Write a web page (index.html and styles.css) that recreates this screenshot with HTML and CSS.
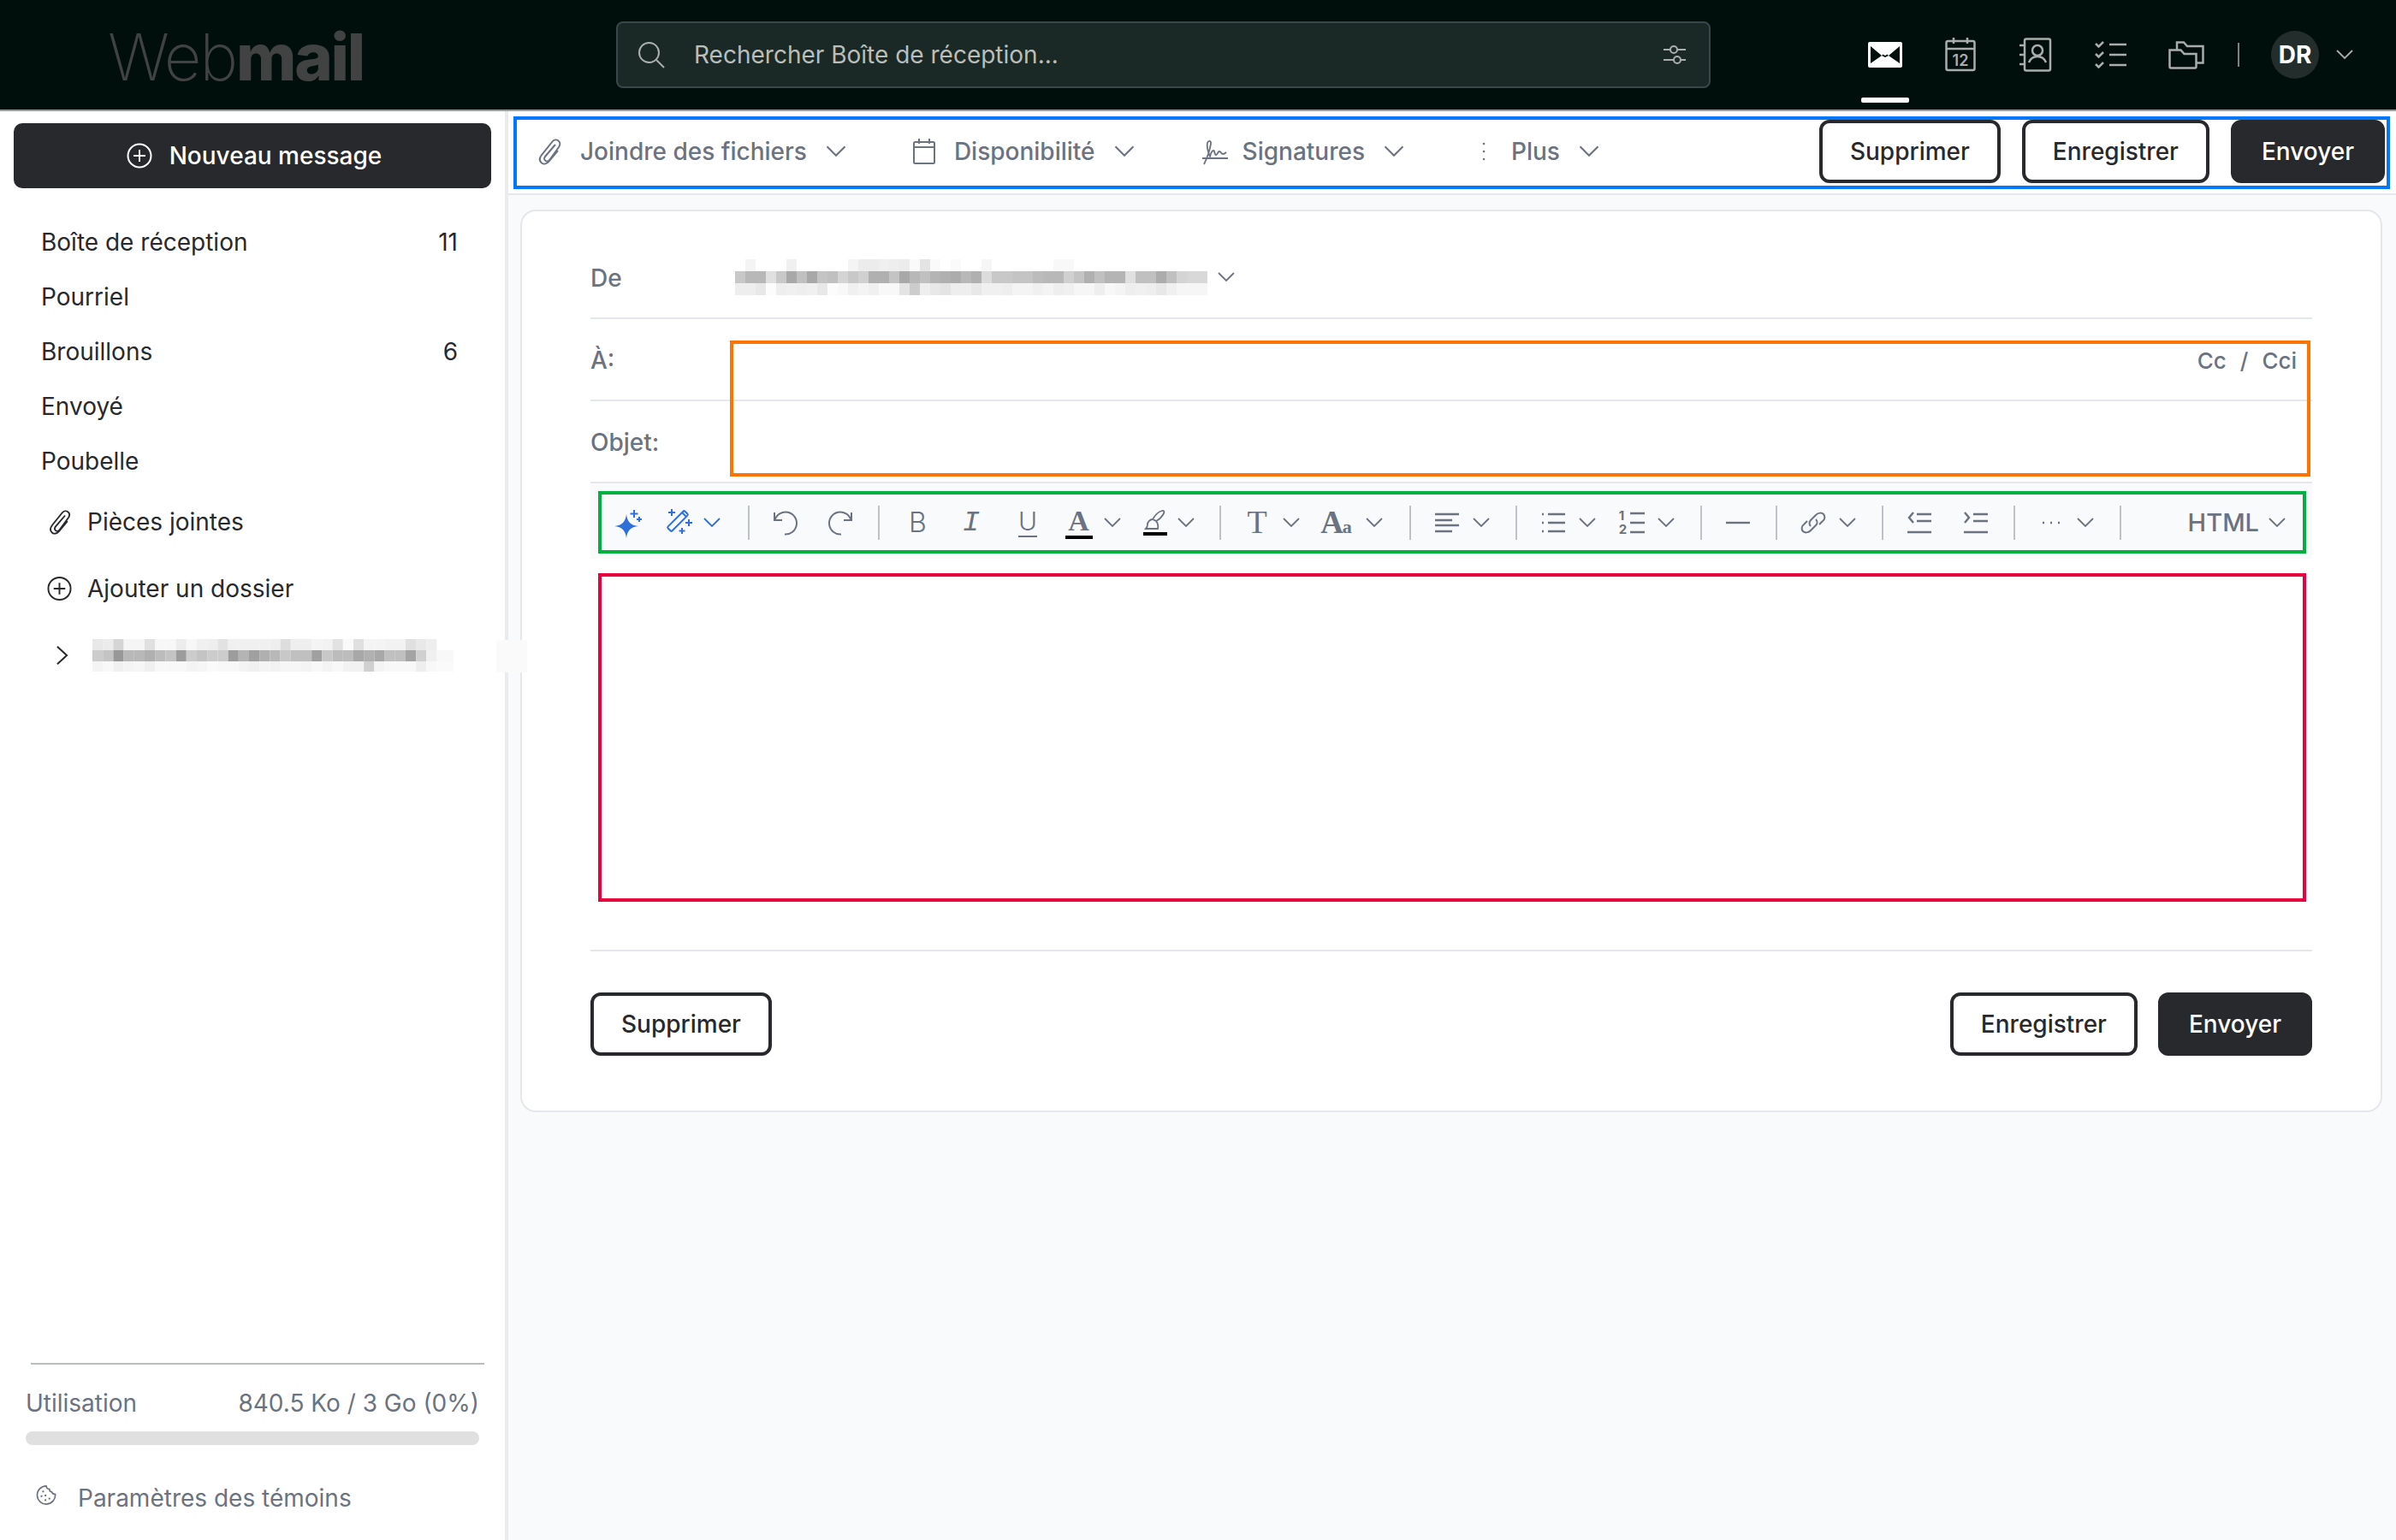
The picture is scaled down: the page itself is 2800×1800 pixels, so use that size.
FILE: index.html
```html
<!DOCTYPE html>
<html lang="fr">
<head>
  <meta charset="UTF-8">
  <title>Webmail</title>
  <link rel="stylesheet" href="styles.css">
</head>
<body>
  <svg class="defs" aria-hidden="true">
    <symbol id="chev" viewBox="0 0 20 12"><path d="M1 1l9 9 9-9" fill="none" stroke="currentColor" stroke-width="1.8"/></symbol>
    <symbol id="clip" viewBox="0 0 28 32"><path d="M21 8L9 22c-1.500 2-1 4 .5 5s3.500.5 5-1.500L25 11c2-3 1.500-6-.5-7.500S19.500 2 17.500 4.500L5 20c-3 4-2.500 7.500 0 9.500s6 1 8.500-2L24 15" fill="none" stroke="currentColor" stroke-width="2"/></symbol>
    <symbol id="plus-circle" viewBox="0 0 30 30"><circle cx="15" cy="15" r="13.500" fill="none" stroke="currentColor" stroke-width="2"/><path d="M15 8v14M8 15h14" stroke="currentColor" stroke-width="2"/></symbol>
  </svg>

  <header class="topbar">
    <div class="logo"><span class="logo-thin">Web</span><span class="logo-bold">mail</span></div>
    <div class="search">
      <svg class="search-icon" viewBox="0 0 32 32"><circle cx="13.500" cy="13.500" r="11.500" fill="none" stroke="currentColor" stroke-width="2"/><path d="M22 22l9 9" stroke="currentColor" stroke-width="2"/></svg>
      <span class="search-text">Rechercher Boîte de réception...</span>
      <svg class="filter-icon" viewBox="0 0 28 24"><path d="M1 6h8M17 6h10M1 18h12M21 18h6" stroke="currentColor" stroke-width="2"/><circle cx="13" cy="6" r="4" fill="none" stroke="currentColor" stroke-width="2"/><circle cx="17" cy="18" r="4" fill="none" stroke="currentColor" stroke-width="2"/></svg>
    </div>
    <nav class="apps">
      <a class="app app-active">
        <svg class="app-icon" width="40" height="30" viewBox="0 0 40 30"><rect width="40" height="30" rx="2" fill="#fff"/><path d="M3 5l13 11-13 9zM37 5L24 16l13 9z" fill="#010f0c"/><path d="M16 16l4 2 4-2-1.500-1.500-2.500 1.500-2.500-1.500z" fill="#010f0c"/></svg>
      </a>
      <a class="app">
        <svg class="app-icon" width="36" height="40" viewBox="0 0 36 40"><rect x="1.500" y="4" width="33" height="34" rx="2" fill="none" stroke="currentColor" stroke-width="2.500"/><path d="M2 13h32M10 0v7M26 0v7" stroke="currentColor" stroke-width="2.500"/><text x="18" y="33" class="cal-num">12</text></svg>
      </a>
      <a class="app">
        <svg class="app-icon" width="38" height="40" viewBox="0 0 38 40"><rect x="6" y="1.500" width="30" height="37" rx="2" fill="none" stroke="currentColor" stroke-width="2.500"/><path d="M0 9h5M0 20h5M0 31h5" stroke="currentColor" stroke-width="2.500"/><circle cx="21" cy="15" r="6" fill="none" stroke="currentColor" stroke-width="2.500"/><path d="M11 29c2-5 6-7 10-7s8 2 10 7" fill="none" stroke="currentColor" stroke-width="2.500"/></svg>
      </a>
      <a class="app">
        <svg class="app-icon" width="38" height="34" viewBox="0 0 38 34"><path d="M1 4l3.500 3.500L10 2M1 16l3.500 3.500L10 14M1 28l3.500 3.500L10 26M17 5h20M17 17h20M17 29h20" fill="none" stroke="currentColor" stroke-width="2.500"/></svg>
      </a>
      <a class="app">
        <svg class="app-icon" width="42" height="34" viewBox="0 0 42 34"><path d="M1.500 11.500h13l4 4.500h14v15a1.500 1.500 0 0 1-1.500 1.500H3a1.500 1.500 0 0 1-1.500-1.500zM10 11V2.500h8l4 4.500h18.500v19.500H33" fill="none" stroke="currentColor" stroke-width="2.500"/></svg>
      </a>
    </nav>
    <span class="app-sep"></span>
    <span class="avatar">DR</span>
    <svg class="avatar-chev"><use href="#chev"/></svg>
  </header>

  <div class="layout">
    <aside class="sidebar">
      <button class="new-msg"><svg class="new-icon"><use href="#plus-circle"/></svg>Nouveau message</button>
      <ul class="folders">
        <li class="folder">Boîte de réception<span class="count">11</span></li>
        <li class="folder">Pourriel</li>
        <li class="folder">Brouillons<span class="count">6</span></li>
        <li class="folder">Envoyé</li>
        <li class="folder">Poubelle</li>
      </ul>
      <div class="side-link"><svg class="side-icon"><use href="#clip"/></svg>Pièces jointes</div>
      <div class="side-link"><svg class="side-icon"><use href="#plus-circle"/></svg>Ajouter un dossier</div>
      <div class="side-link account">
        <svg class="acc-chev" viewBox="0 0 16 26"><path d="M2 2l12 11L2 24" fill="none" stroke="currentColor" stroke-width="2.200"/></svg>
        <canvas class="mosaic" id="mosaic-account" width="422" height="38"></canvas>
      </div>
      <span class="resize-ghost"></span>
      <div class="side-foot">
        <div class="side-rule"></div>
        <div class="usage-row"><span>Utilisation</span><span>840.5 Ko / 3 Go (0%)</span></div>
        <div class="usage-bar"></div>
        <div class="cookies">
          <svg class="cookie-icon" viewBox="0 0 26 26"><path d="M13 2c.5 3 2 4 4 4 0 2 1 3.500 3 3.500 .5 2 2 3 4.500 3A11.500 11.500 0 1 1 13 2z" fill="none" stroke="currentColor" stroke-width="1.800"/><path d="M9 9h.1M7 15h.1M12 14h.1M12 20h.1M17 18h.1" stroke="currentColor" stroke-width="2.500" stroke-linecap="round"/></svg>
          Paramètres des témoins
        </div>
      </div>
    </aside>

    <main class="main">
      <div class="compose-bar">
        <div class="bar-box">
          <div class="bar-item"><svg class="bar-clip"><use href="#clip"/></svg>Joindre des fichiers<svg class="bar-chev"><use href="#chev"/></svg></div>
          <div class="bar-item"><svg class="bar-cal" viewBox="0 0 26 30"><rect x="1" y="4" width="24" height="25" rx="1.500" fill="none" stroke="currentColor" stroke-width="2"/><path d="M1 10h24M7 0v6M19 0v6" stroke="currentColor" stroke-width="2"/></svg>Disponibilité<svg class="bar-chev"><use href="#chev"/></svg></div>
          <div class="bar-item"><svg class="bar-sign" viewBox="0 0 32 32"><path d="M1 24h30M3 31C7 23 10 13 11 7c.5-4-3-4-4-1-1 4 .5 10 3 16 1-4 2-7 4-7s1 5 3 5 2-4 4-4 2 3 4 3 3-1 4-2" fill="none" stroke="currentColor" stroke-width="1.800"/></svg>Signatures<svg class="bar-chev"><use href="#chev"/></svg></div>
          <div class="bar-item bar-plus"><svg class="bar-dots" viewBox="0 0 4 24"><path d="M2 3h.1M2 12h.1M2 21h.1" stroke="currentColor" stroke-width="2.500" stroke-linecap="round"/></svg>Plus<svg class="bar-chev"><use href="#chev"/></svg></div>
          <div class="bar-actions">
            <button class="btn btn-del">Supprimer</button>
            <button class="btn btn-save">Enregistrer</button>
            <button class="btn btn-send">Envoyer</button>
          </div>
        </div>
      </div>

      <section class="card">
        <div class="field">
          <label class="field-label">De</label>
          <canvas class="mosaic from-mosaic" id="mosaic-from" width="552" height="42"></canvas>
          <svg class="from-chev"><use href="#chev"/></svg>
        </div>
        <div class="recipients">
          <div class="field">
            <label class="field-label">À:</label>
            <span class="cc"><span>Cc</span><span>/</span><span>Cci</span></span>
          </div>
          <div class="field">
            <label class="field-label">Objet:</label>
          </div>
          <div class="outline-to"></div>
        </div>

        <div class="editor-tools">
          <div class="tools-box">
            <div class="tool-group tool-group-first">
              <span class="tool tool-ai tool-spark">
                <svg width="34" height="36" viewBox="0 0 34 36"><path d="M15 8c1 9 5 13 14 14-9 1-13 5-14 14-1-9-5-13-14-14 9-1 13-5 14-14z" fill="#2f6fd8"/><path d="M24 3v9M19.500 7.500h9M30 11v6M27 14h6" stroke="#2f6fd8" stroke-width="2"/></svg>
              </span>
              <span class="drop drop-ai">
                <span class="tool tool-ai">
                  <svg width="34" height="34" viewBox="0 0 34 34"><rect x="-14" y="-3.500" width="28" height="7" rx="1.500" transform="translate(15 15) rotate(-45)" fill="none" stroke="#2f6fd8" stroke-width="2"/><path d="M20 5l5 5" stroke="#2f6fd8" stroke-width="2"/><path d="M8 1v8M4 5h8M28 13v8M24 17h8M20 23v7M16.500 26.500h7" stroke="#2f6fd8" stroke-width="2"/></svg>
                </span>
                <svg class="tool-chev tool-ai"><use href="#chev"/></svg>
              </span>
            </div>
            <div class="tool-group">
              <span class="tool"><svg width="32" height="32" viewBox="0 0 32 32"><path d="M3 4v9h9" fill="none" stroke="currentColor" stroke-width="2"/><path d="M3.500 13A13 13 0 1 1 15 29.500" fill="none" stroke="currentColor" stroke-width="2"/></svg></span>
              <span class="tool"><svg width="32" height="32" viewBox="0 0 32 32"><path d="M29 4v9h-9" fill="none" stroke="currentColor" stroke-width="2"/><path d="M28.500 13A13 13 0 1 0 17 29.500" fill="none" stroke="currentColor" stroke-width="2"/></svg></span>
            </div>
            <div class="tool-group">
              <span class="tool"><span class="glyph glyph-b">B</span></span>
              <span class="tool"><span class="glyph glyph-i">I</span></span>
              <span class="tool"><span class="glyph glyph-u">U</span></span>
              <span class="drop drop-a"><span class="tool"><span class="glyph glyph-a">A</span></span><svg class="tool-chev"><use href="#chev"/></svg></span>
              <span class="drop drop-brush"><span class="tool"><span class="brush-wrap"><svg width="28" height="24" viewBox="0 0 28 24"><path d="M3 22h14c1-5 0-7-2-9l-4-2c-3 0-6 3-6 6 0 2-1 4-2 5zM11 11c3-5 7-9 11-10 2-.5 3 1 2 3-2 4-5 7-9 9" fill="none" stroke="currentColor" stroke-width="1.800"/></svg></span></span><svg class="tool-chev"><use href="#chev"/></svg></span>
            </div>
            <div class="tool-group">
              <span class="drop"><span class="tool"><span class="glyph glyph-t">T</span></span><svg class="tool-chev"><use href="#chev"/></svg></span>
              <span class="drop drop-aa"><span class="tool"><span class="glyph glyph-aa">A<small>a</small></span></span><svg class="tool-chev"><use href="#chev"/></svg></span>
            </div>
            <div class="tool-group">
              <span class="drop"><span class="tool"><svg width="28" height="24" viewBox="0 0 28 24"><path d="M0 2h28M0 9h20M0 15h28M0 22h20" stroke="currentColor" stroke-width="2.400"/></svg></span><svg class="tool-chev"><use href="#chev"/></svg></span>
            </div>
            <div class="tool-group">
              <span class="drop"><span class="tool"><svg width="28" height="26" viewBox="0 0 28 26"><path d="M1 3h2M1 13h2M1 23h2M8 3h20M8 13h20M8 23h20" stroke="currentColor" stroke-width="2.400"/></svg></span><svg class="tool-chev"><use href="#chev"/></svg></span>
              <span class="drop"><span class="tool"><span class="ol-wrap"><span class="ol-nums"><span>1</span><span>2</span></span><svg width="18" height="28" viewBox="0 0 18 28"><path d="M1 3h17M1 14h17M1 25h17" stroke="currentColor" stroke-width="2.400"/></svg></span></span><svg class="tool-chev"><use href="#chev"/></svg></span>
            </div>
            <div class="tool-group">
              <span class="tool"><svg width="28" height="4" viewBox="0 0 28 4"><path d="M0 2h28" stroke="currentColor" stroke-width="2.400"/></svg></span>
            </div>
            <div class="tool-group">
              <span class="drop"><span class="tool"><svg width="32" height="30" viewBox="0 0 32 30"><path d="M13 19c-2-2-2-5 0-7l6-6c3-3 7-3 9-1s2 6-1 8l-4 4M19 11c2 2 2 5 0 7l-6 6c-3 3-7 3-9 1s-2-6 1-8l4-4" fill="none" stroke="currentColor" stroke-width="2"/></svg></span><svg class="tool-chev"><use href="#chev"/></svg></span>
            </div>
            <div class="tool-group">
              <span class="tool"><svg width="28" height="26" viewBox="0 0 28 26"><path d="M7 1L2 7l5 6M11 3h17M11 11h17M0 24h28" fill="none" stroke="currentColor" stroke-width="2.400"/></svg></span>
              <span class="tool tool-indent"><svg width="28" height="26" viewBox="0 0 28 26"><path d="M1 1l5 6-5 6M11 3h17M11 11h17M0 24h28" fill="none" stroke="currentColor" stroke-width="2.400"/></svg></span>
            </div>
            <div class="tool-group">
              <span class="drop"><span class="tool"><svg width="22" height="4" viewBox="0 0 22 4"><path d="M1 2h2M10 2h2M19 2h2" stroke="currentColor" stroke-width="2.400"/></svg></span><svg class="tool-chev"><use href="#chev"/></svg></span>
            </div>
            <div class="tool-group tool-group-html">
              <span class="html-label">HTML</span><svg class="tool-chev"><use href="#chev"/></svg>
            </div>
          </div>
        </div>

        <div class="editor-body"></div>

        <div class="card-actions">
          <button class="btn btn-del">Supprimer</button>
          <button class="btn btn-save card-save">Enregistrer</button>
          <button class="btn btn-send">Envoyer</button>
        </div>
      </section>
    </main>
  </div>

  <script src="script.js"></script>
</body>
</html>
```
FILE: styles.css
```css
* {
  box-sizing: border-box;
}

html, body {
  margin: 0;
  height: 100%;
}

body {
  font-family: Inter, "Liberation Sans", sans-serif;
  font-size: 28px;
  color: #28292c;
  background: #fff;
  overflow: hidden;
}

button {
  font: inherit;
  font-weight: 500;
  cursor: pointer;
}

.defs {
  display: none;
}

/* top bar */
.topbar {
  display: flex;
  align-items: center;
  height: 130px;
  background: #010f0c;
  border-bottom: 2px solid #9a9f9d;
}

.logo {
  width: 720px;
  padding: 3px 0 0 126px;
  color: #414343;
  font-size: 76px;
  line-height: 1;
  letter-spacing: -2.3px;
}

.logo-thin {
  font-weight: 200;
}

.logo-bold {
  font-weight: 800;
}

.search {
  display: flex;
  align-items: center;
  width: 1279px;
  height: 78px;
  padding: 0 26px 0 23px;
  background: #1b2926;
  border: 2px solid #39474a;
  border-radius: 8px;
  color: #a9b0ae;
}

.search-icon {
  width: 32px;
  height: 32px;
}

.search-text {
  margin-left: 34px;
  color: #b9bebc;
}

.filter-icon {
  width: 28px;
  height: 24px;
  margin-left: auto;
}

.cal-num {
  font-family: Inter, sans-serif;
  font-size: 18px;
  font-weight: 600;
  text-anchor: middle;
  fill: currentColor;
}

.apps {
  display: flex;
  gap: 32px;
  margin-left: 176px;
  height: 128px;
}

.app {
  position: relative;
  display: flex;
  align-items: center;
  justify-content: center;
  width: 56px;
  color: #a9adab;
}

.app-active::after {
  content: "";
  position: absolute;
  left: 0;
  right: 0;
  bottom: 8px;
  height: 6px;
  border-radius: 2px;
  background: #fff;
}

.app-sep {
  width: 2px;
  height: 28px;
  margin-left: 32px;
  background: #7d8280;
}

.avatar {
  display: flex;
  align-items: center;
  justify-content: center;
  width: 56px;
  height: 56px;
  margin-left: 37px;
  border-radius: 50%;
  background: #232e2c;
  color: #fff;
  font-weight: 700;
}

.avatar-chev {
  width: 20px;
  height: 12px;
  margin-left: 20px;
  color: #a9adab;
}

/* layout */
.layout {
  display: flex;
  height: calc(100% - 130px);
}

.sidebar {
  position: relative;
  display: flex;
  flex-direction: column;
  flex: none;
  width: 594px;
  padding: 14px 0 0;
  border-right: 4px solid #e9ebef;
}

.new-msg {
  display: flex;
  align-items: center;
  justify-content: center;
  gap: 20px;
  width: 558px;
  height: 76px;
  margin-left: 16px;
  padding: 0 0 0 4px;
  background: #28292c;
  color: #fff;
  border: none;
  border-radius: 10px;
}

.new-icon {
  width: 30px;
  height: 30px;
}

.folders {
  list-style: none;
  margin: 31px 0 0;
  padding: 0;
}

.folder {
  display: flex;
  justify-content: space-between;
  align-items: center;
  height: 64px;
  padding: 0 55px 0 48px;
}

.side-link {
  display: flex;
  align-items: center;
  gap: 18px;
  height: 78px;
  padding-left: 55px;
}

.side-icon {
  flex: none;
  width: 29px;
  height: 30px;
}

.account {
  gap: 28px;
  padding-left: 65px;
}

.acc-chev {
  flex: none;
  width: 15px;
  height: 24px;
}

.mosaic {
  display: block;
}

.resize-ghost {
  position: absolute;
  left: 580px;
  top: 618px;
  width: 36px;
  height: 38px;
  background: #fafafa;
}

.side-foot {
  margin-top: auto;
  padding: 0 30px 27px;
  color: #6b7280;
}

.side-rule {
  width: 530px;
  height: 2px;
  margin-left: 6px;
  background: #b6bdbb;
}

.usage-row {
  display: flex;
  justify-content: space-between;
  align-items: center;
  height: 76px;
  padding-top: 14px;
}

.usage-bar {
  height: 16px;
  margin-top: 2px;
  border-radius: 8px;
  background: #e0e0e0;
}

.cookies {
  display: flex;
  align-items: center;
  gap: 25px;
  height: 44px;
  margin-top: 40px;
  padding-left: 12px;
}

.cookie-icon {
  width: 24px;
  height: 24px;
  margin-top: -8px;
}

/* compose bar */
.main {
  flex: 1;
  background: #f9fafb;
}

.compose-bar {
  padding: 6px 7px 5px 6px;
  background: #fff;
  border-bottom: 2px solid #e5e7eb;
}

.bar-box {
  display: flex;
  gap: 78px;
  height: 85px;
  padding: 0 2px 0 24px;
  border: 4px solid #0077ff;
  color: #6b7280;
  font-weight: 500;
}

.bar-item {
  display: flex;
  align-items: center;
  gap: 22px;
  height: 74px;
}

.bar-clip {
  width: 28px;
  height: 32px;
}

.bar-cal {
  width: 26px;
  height: 30px;
}

.bar-sign {
  width: 32px;
  height: 32px;
  margin-right: -6px;
}

.bar-plus {
  margin-left: 5px;
}

.bar-dots {
  width: 4px;
  height: 24px;
  margin: 0 8px;
}

.bar-chev {
  width: 24px;
  height: 14px;
}

.bar-actions {
  display: flex;
  gap: 25px;
  margin-left: auto;
}

.btn {
  height: 74px;
  padding: 0 32px;
  border: 4px solid #28292c;
  border-radius: 12px;
  background: #fff;
  color: #28292c;
}

.btn-send {
  background: #28292c;
  color: #fff;
}

/* card */
.card {
  margin: 17px 16px 0 14px;
  padding: 30px 80px 64px;
  background: #fff;
  border: 2px solid #e5e7eb;
  border-radius: 18px;
}

.field {
  display: flex;
  align-items: center;
  height: 96px;
  border-bottom: 2px solid #e5e7eb;
}

.field-label {
  flex: none;
  width: 163px;
  padding-top: 2px;
  color: #6b7280;
  font-weight: 500;
}

.from-mosaic {
  margin-left: 6px;
}

.from-chev {
  width: 20px;
  height: 12px;
  margin-left: 12px;
  color: #6b7280;
}

.recipients {
  position: relative;
}

.outline-to {
  position: absolute;
  left: 163px;
  right: 2px;
  top: 25px;
  bottom: 8px;
  border: 4px solid #ff7300;
}

.cc {
  display: flex;
  gap: 16px;
  margin-left: auto;
  padding: 2px 18px 0 0;
  color: #6b7280;
  font-size: 26px;
  font-weight: 500;
}

/* editor toolbar */
.editor-tools {
  padding: 9px 7px 6px 9px;
  background: #f9fafb;
  color: #6b7280;
}

.tools-box {
  display: flex;
  height: 73px;
  padding: 0 0 0 2px;
  align-items: center;
  border: 4px solid #00b140;
}

.tool-group {
  display: flex;
  align-items: center;
  height: 40px;
  padding: 0 12px;
  border-right: 2px solid #bcc2c6;
  margin-right: -2px;
}

.tool-group-first {
  padding-left: 0;
}

.tool-group-html {
  gap: 13px;
  margin: 0 0 0 auto;
  padding: 0 20px 0 0;
  border: none;
}

.tool {
  display: flex;
  align-items: center;
  justify-content: center;
  flex: none;
  width: 64px;
}

.tool-ai {
  color: #2f6fd8;
}

.tool-spark {
  margin-left: -3px;
}

.tool-indent {
  margin-left: 2px;
}

.drop {
  display: flex;
  align-items: center;
  width: 100px;
}

.drop + .drop {
  margin-left: -8px;
}

.drop-ai {
  margin-left: -4px;
}

.drop-ai .tool-chev {
  margin-left: -4px;
}

.drop.drop-brush {
  width: 95px;
  margin-left: -12px;
}

.drop-brush .tool-chev {
  margin-left: -6px;
}

.drop-a .tool-chev {
  margin-left: -4px;
}

.drop.drop-aa {
  width: 106px;
}

.drop-aa .tool-chev {
  margin-left: 3px;
}

.tool-chev {
  flex: none;
  width: 20px;
  height: 12px;
  margin-left: -2px;
}

.glyph {
  display: block;
  line-height: 1;
  color: #6b7280;
}

.glyph-b {
  margin-left: 5px;
  font-size: 32px;
  font-weight: 300;
}

.glyph-i {
  margin-left: 2px;
  font-family: "Liberation Mono", monospace;
  font-size: 34px;
  font-style: italic;
}

.glyph-u {
  margin-left: 6px;
  font-size: 30px;
  font-weight: 300;
  border-bottom: 2px solid #6b7280;
  padding-bottom: 2px;
}

.glyph-a {
  margin-right: 3px;
  font-family: "Liberation Serif", serif;
  font-size: 34px;
  font-weight: 700;
  width: 32px;
  text-align: center;
  border-bottom: 4px solid #000;
}

.brush-wrap {
  display: block;
  width: 28px;
  padding-bottom: 2px;
  border-bottom: 4px solid #000;
}

.brush-wrap svg {
  display: block;
}

.glyph-t {
  padding-bottom: 2px;
  font-family: "Liberation Serif", serif;
  font-size: 38px;
}

.glyph-aa {
  font-family: "Liberation Serif", serif;
  font-size: 37px;
  font-weight: 700;
  letter-spacing: -1px;
}

.glyph-aa small {
  font-size: 22px;
}

.ol-wrap {
  display: flex;
  align-items: center;
  gap: 3px;
}

.ol-nums {
  display: flex;
  flex-direction: column;
  font-size: 15px;
  font-weight: 700;
  line-height: 16px;
}

.html-label {
  font-weight: 500;
  font-size: 29px;
}

/* editor body */
.editor-body {
  height: 384px;
  margin: 17px 7px 56px 9px;
  border: 4px solid #e8003f;
}

.card-actions {
  display: flex;
  gap: 24px;
  padding-top: 48px;
  border-top: 2px solid #e5e7eb;
}

.card-save {
  margin-left: auto;
}
```
FILE: script.js
```js
// blurred account names, one list of greys per mosaic row
const accountRows = [
  "e8 ec d5 f5 f5 e0 f7 f7 ec f7 f0 ee e2 f0 f0 f0 f0 ee dd ee ee f4 f2 e2 fa e0 f4 f4 f2 f2 e0 e8 ee ff ff",
  "cc c4 98 b8 b8 b0 bc c4 9c cc c4 cc cc 9c b4 a0 b0 b8 c8 c0 c0 a0 c8 bc bc a8 b0 a8 c0 c0 a4 d0 f0 f8 f8",
  "f4 f8 f0 f4 f6 f0 f8 f8 f8 f4 f6 fa f8 f8 f4 f0 f4 f2 f6 f6 f4 f8 f4 f8 f2 f2 d0 f4 f8 f8 f8 ee f8 fa fa"
];

const fromRows = [
  "ff f4 ff ff ff f0 ff ff ff ff ff f4 ec ec f0 ee ec fa e4 fa ff fa ff ff f6 ff ff ff ff ff ff f8 f8 ff ff ff ff ff ff ff ff ff ff ff ff ff",
  "c8 b8 b8 e0 c8 a8 c0 a8 c4 c0 d4 c8 d0 b0 b0 c4 a8 b8 c0 b4 b0 ac b8 b0 dc c8 c8 c4 c4 bc b8 b8 d0 c4 b0 c0 b4 b4 e0 c0 c0 ac c0 d4 d8 d8",
  "ee ee e8 fc ee f0 ee f0 e8 fc f8 f0 f4 f0 f8 f8 e4 cc ee e8 e4 ee ee e8 f0 f0 ee f4 f4 f0 f4 ee f0 f6 f6 ee f8 f4 ee f0 ee e8 f0 f6 f6 f6"
];

function drawMosaic(id, rows, cellW, cellH) {
  const ctx = document.getElementById(id).getContext("2d");
  rows.forEach((row, y) => {
    row.split(" ").forEach((grey, x) => {
      ctx.fillStyle = `#${grey}${grey}${grey}`;
      ctx.fillRect(x * cellW, y * cellH, cellW, cellH);
    });
  });
}

drawMosaic("mosaic-account", accountRows, 12.2, 13);
drawMosaic("mosaic-from", fromRows, 12, 14);
```
